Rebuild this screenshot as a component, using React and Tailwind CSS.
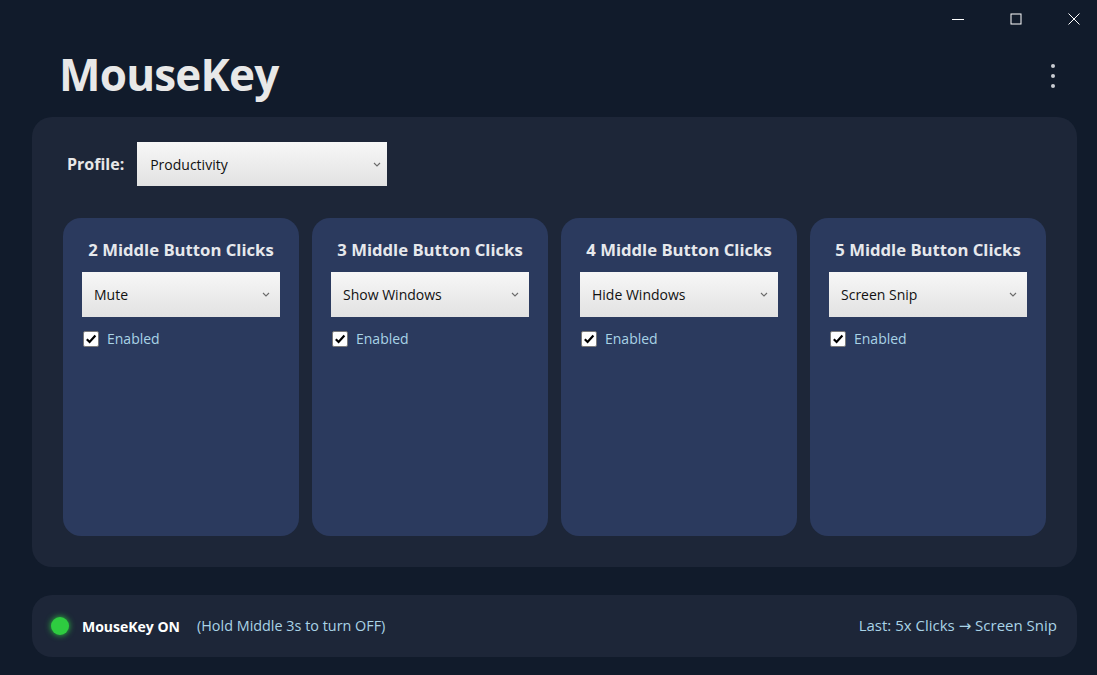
import React from "react";

const font = { fontFamily: '"Open Sans", "Noto Sans", sans-serif' };

function Chevron() {
  return (
    <svg width="8" height="5" viewBox="0 0 8 5" className="shrink-0">
      <path d="M1 1 L4 4 L7 1" fill="none" stroke="#6b6b6b" strokeWidth="1.1" />
    </svg>
  );
}

function Select({ value, className }) {
  return (
    <div className={"flex items-center justify-between bg-gradient-to-b from-[#f7f7f7] to-[#e2e2e2] text-[#111] text-[14px] " + className}>
      <span>{value}</span>
      <Chevron />
    </div>
  );
}

function Check() {
  return (
    <span className="w-[16px] h-[16px] bg-white border border-[#7a7a7a] flex items-center justify-center rounded-[2px]">
      <svg width="12" height="12" viewBox="0 0 12 12">
        <path d="M1.8 6.2 L4.6 9 L10.4 2.6" fill="none" stroke="#000" strokeWidth="2.2" />
      </svg>
    </span>
  );
}

function Card({ n, action }) {
  return (
    <div className="flex-1 bg-[#2b3a5e] rounded-[18px] h-[318px] px-[19px] pt-[21px]">
      <div className="text-center text-[#e6e8ec] font-bold text-[16.7px] leading-[22px]">{n} Middle Button Clicks</div>
      <Select value={action} className="mt-[11px] h-[45px] pl-[12px] pr-[10px]" />
      <div className="flex items-center gap-[8px] mt-[13px] pl-[1px]">
        <Check />
        <span className="text-[#a9d3e6] text-[14px] leading-[18px]">Enabled</span>
      </div>
    </div>
  );
}

export default function App() {
  return (
    <div style={font} className="w-[1097px] h-[675px] bg-[#111b2b] flex flex-col overflow-hidden">
      <div className="h-[38px] flex justify-end items-center pr-[16px]">
        <div className="flex items-center gap-[44px] text-white">
          <svg width="14" height="14" viewBox="0 0 14 14"><path d="M1 7.5 H13" stroke="#fff" strokeWidth="1" /></svg>
          <svg width="14" height="14" viewBox="0 0 14 14"><rect x="2" y="2" width="10" height="10" fill="none" stroke="#fff" strokeWidth="1" /></svg>
          <svg width="14" height="14" viewBox="0 0 14 14"><path d="M1.5 1.5 L12.5 12.5 M12.5 1.5 L1.5 12.5" stroke="#fff" strokeWidth="1" /></svg>
        </div>
      </div>
      <div className="flex items-center justify-between pl-[59px] pr-[42px] h-[72px]">
        <h1 className="text-[44px] font-bold text-[#e8e8e8] tracking-[-0.8px] leading-none">MouseKey</h1>
        <div className="flex flex-col gap-[6px] items-center pt-[4px]">
          <span className="w-[4px] h-[4px] rounded-full bg-[#c9ccd2]" />
          <span className="w-[4px] h-[4px] rounded-full bg-[#c9ccd2]" />
          <span className="w-[4px] h-[4px] rounded-full bg-[#c9ccd2]" />
        </div>
      </div>
      <div className="ml-[32px] mr-[20px] mt-[7px] bg-[#1d2638] rounded-[20px] h-[450px] px-[31px] pt-[25px]">
        <div className="flex items-center gap-[13px] pl-[4px]">
          <span className="text-[#e8e8e8] font-bold text-[16px]">Profile:</span>
          <Select value="Productivity" className="w-[250px] h-[44px] pl-[13px] pr-[6px]" />
        </div>
        <div className="flex gap-[13px] mt-[32px]">
          <Card n={2} action="Mute" />
          <Card n={3} action="Show Windows" />
          <Card n={4} action="Hide Windows" />
          <Card n={5} action="Screen Snip" />
        </div>
      </div>
      <div className="ml-[32px] mr-[20px] mt-[28px] bg-[#1d2638] rounded-[20px] h-[62px] flex items-center pl-[19px] pr-[20px]">
        <span className="w-[18px] h-[18px] rounded-full bg-[#2ecc40] shadow-[0_0_6px_#2ecc40]" />
        <span className="ml-[13px] text-white font-bold text-[14px]">MouseKey ON</span>
        <span className="ml-[17px] text-[#a9d3e6] text-[14.4px]">(Hold Middle 3s to turn OFF)</span>
        <span className="ml-auto text-[#a9d3e6] text-[15px]">
          Last: 5x Clicks <span style={{ fontFamily: '"DejaVu Sans", sans-serif' }} className="text-[15px]">→</span> Screen Snip
        </span>
      </div>
    </div>
  );
}
